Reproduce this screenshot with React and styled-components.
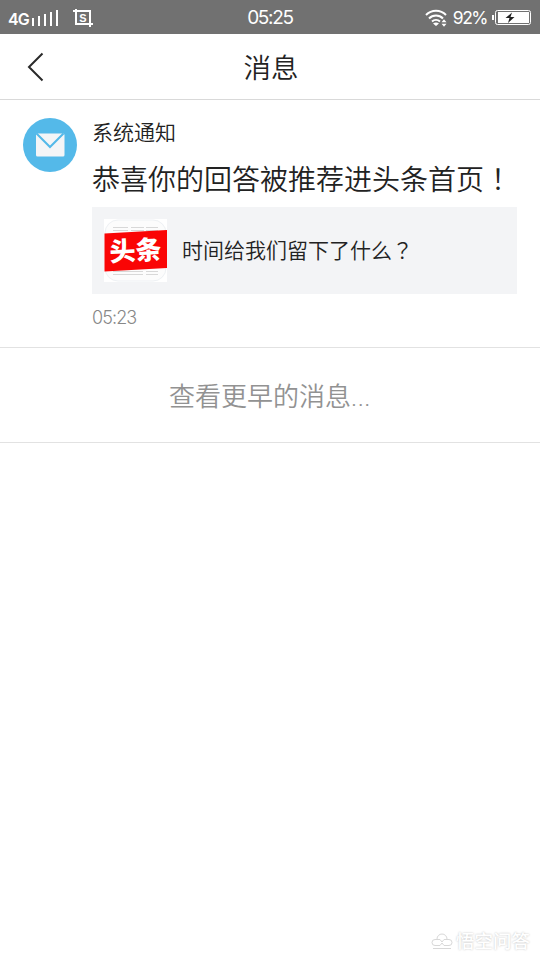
import styled, { createGlobalStyle } from "styled-components";

const GlobalStyle = createGlobalStyle`
  * {
    box-sizing: border-box;
  }

  body {
    margin: 0;
    background-color: #ffffff;
    font-family: Roboto, "Noto Sans CJK SC", sans-serif;
    font-weight: 350;
    color: #222222;
  }
`;

// Page
const Page = styled.div`
  display: flex;
  flex-direction: column;
  width: 100%;
  height: 960px;
  overflow: hidden;
`;

// StatusBar
const StatusBar = styled.div`
  display: grid;
  grid-template-columns: 1fr auto 1fr;
  align-items: center;
  height: 34px;
  padding: 0 8px;
  flex-shrink: 0;
  background-color: #717171;
  color: #ffffff;
`;

// StatusGroup
const StatusGroup = styled.div`
  display: flex;
  align-items: center;
  justify-content: ${({ $end }) => ($end ? "flex-end" : "flex-start")};
`;

// Network
const Network = styled.span`
  width: 22px;
  margin-right: 1px;
  padding-top: 3px;
  font-family: Inter, sans-serif;
  font-size: 16px;
  font-weight: 600;
  line-height: 20px;
  letter-spacing: -0.9px;
`;

// Clock
const Clock = styled.span`
  padding-top: 1px;
  font-family: Inter, sans-serif;
  font-size: 19px;
  font-weight: 400;
  line-height: 34px;
  letter-spacing: -1.3px;
`;

// Percent
const Percent = styled.span`
  margin: 0 5px;
  font-family: Inter, sans-serif;
  font-size: 17.5px;
  font-weight: 400;
  line-height: 34px;
  letter-spacing: -1.5px;
`;

// SignalIcon
const SignalIcon = styled.svg`
  width: 27px;
  height: 34px;
  margin-right: 15px;
`;

// CropIcon
const CropIcon = styled.svg`
  width: 20px;
  height: 34px;
`;

// WifiIcon
const WifiIcon = styled.svg`
  width: 23px;
  height: 34px;
`;

// BatteryIcon
const BatteryIcon = styled.svg`
  width: 40px;
  height: 34px;
`;

// Header
const Header = styled.header`
  display: grid;
  grid-template-columns: 72px 1fr 72px;
  align-items: center;
  height: 66px;
  flex-shrink: 0;
  border-bottom: 1px solid #d9d9d9;
`;

// BackButton
const BackButton = styled.button`
  display: flex;
  height: 65px;
  padding: 0 0 0 27px;
  border: none;
  background: none;
`;

// Title
const Title = styled.h1`
  margin: 0;
  padding: 4px 0 0 2px;
  font-size: 27.5px;
  font-weight: 350;
  line-height: 40px;
  text-align: center;
`;

// Notice
const Notice = styled.section`
  display: flex;
  gap: 15px;
  height: 248px;
  padding: 18px 23px 0;
  flex-shrink: 0;
  border-bottom: 1px solid #e2e2e2;
`;

// Avatar
const Avatar = styled.svg`
  width: 54px;
  height: 54px;
  flex-shrink: 0;
`;

// NoticeBody
const NoticeBody = styled.div`
  flex: 1;
  min-width: 0;
  white-space: nowrap;
`;

// Sender
const Sender = styled.div`
  height: 39px;
  font-size: 21px;
  line-height: 30px;
`;

// Message
const Message = styled.div`
  height: 50px;
  font-size: 28px;
  line-height: 42px;
`;

// Mark, full-width punctuation centred in its square
const Mark = styled.span`
  font-family: "Noto Sans CJK TC", sans-serif;
`;

// QuestionCard
const QuestionCard = styled.div`
  display: flex;
  align-items: center;
  gap: 15px;
  height: 87px;
  padding-left: 12px;
  background-color: #f3f4f6;
  font-size: 21px;
`;

// Question
const Question = styled.span`
  padding-bottom: 1px;
  line-height: 30px;
`;

// Logo
const Logo = styled.svg`
  width: 63px;
  height: 63px;
  flex-shrink: 0;
`;

// SentAt
const SentAt = styled.div`
  margin-top: 12px;
  font-family: Inter, sans-serif;
  font-size: 18px;
  font-weight: 300;
  line-height: 24px;
  letter-spacing: -0.9px;
  color: #888888;
`;

// MoreButton
const MoreButton = styled.button`
  height: 95px;
  padding: 3px 0 0;
  flex-shrink: 0;
  border: none;
  border-bottom: 1px solid #e2e2e2;
  background: none;
  font-family: inherit;
  font-size: 26px;
  font-weight: 350;
  line-height: 40px;
  color: #929292;
`;

// Dots
const Dots = styled.span`
  letter-spacing: 0.4px;
`;

// Watermark
const Watermark = styled.div`
  display: flex;
  align-items: center;
  align-self: flex-end;
  gap: 3px;
  margin: auto 10px 5px 0;
  font-size: 18.5px;
  font-weight: 500;
  line-height: 26px;
  color: #ffffff;
  text-shadow: 0 0 2px #bdbdbd;
`;

const App = () => {
  return (
    <Page>
      <GlobalStyle />
      <StatusBar>
        <StatusGroup>
          <Network>4G</Network>
          <SignalIcon viewBox="0 0 27 34" stroke="#fff" strokeWidth="2">
            <path d="M2 17v8M8 15v10M14 13v12M20 11v14M26 9v16" />
          </SignalIcon>
          <CropIcon viewBox="0 0 20 34" fill="none" stroke="#fff" strokeWidth="2">
            <path d="M0 10h17v16M3 8v15h17" />
            <text
              x="10"
              y="20.5"
              fill="#fff"
              stroke="none"
              fontFamily="Liberation Sans"
              fontSize="11"
              fontWeight="700"
              textAnchor="middle"
            >
              S
            </text>
          </CropIcon>
        </StatusGroup>
        <Clock>05:25</Clock>
        <StatusGroup $end>
          <WifiIcon viewBox="0 0 23 34" fill="none" stroke="#fff" strokeWidth="2">
            <path d="M1 14a14 14 0 0 1 20 0M4 17.5a9.8 9.8 0 0 1 14 0M7 20.5a6 6 0 0 1 8 0" />
            <path d="M8 22.5q3-2 6 0l-3 2.5zM16.5 21.3l2.5-3 2.5 3zM16.5 22.7l2.5 3 2.5-3z" fill="#fff" stroke="none" />
          </WifiIcon>
          <Percent>92%</Percent>
          <BatteryIcon viewBox="0 0 40 34" fill="none">
            <path d="M1 14v5" stroke="#fff" strokeWidth="2" />
            <rect x="3.5" y="9.5" width="35" height="14" rx="2" stroke="#fff" />
            <rect x="6" y="11" width="31" height="11" fill="#fff" />
            <path d="M20 11.5l-6.5 5.5h4l-1.5 5 6.5-6h-4z" fill="#222" />
          </BatteryIcon>
        </StatusGroup>
      </StatusBar>

      <Header>
        <BackButton aria-label="返回">
          <svg width="18" height="65" viewBox="0 0 18 65" fill="none" stroke="#2a2a2a" strokeWidth="2">
            <path d="M15.5 19.5L2 33l13.5 13.5" />
          </svg>
        </BackButton>
        <Title>消息</Title>
      </Header>

      <Notice>
        <Avatar viewBox="0 0 54 54">
          <circle cx="27" cy="27" r="27" fill="#54b9e9" />
          <rect x="13" y="15.5" width="28.5" height="23" rx="1.5" fill="#f4f5f7" />
          <path d="M13.5 15.5L27 29l13.5-13.5" fill="none" stroke="#54b9e9" strokeWidth="2" />
        </Avatar>
        <NoticeBody>
          <Sender>系统通知</Sender>
          <Message>
            恭喜你的回答被推荐进头条首页<Mark>！</Mark>
          </Message>
          <QuestionCard>
            <Logo viewBox="0 0 63 63">
              <rect width="63" height="63" fill="#fff" />
              <rect x="1" y="1" width="61" height="61" rx="13" fill="#fcfcfc" stroke="#eef1f4" />
              <path
                d="M9 8.5h15M27 8.5h13M42 8.5h12M9 11.5h15M27 11.5h13M42 11.5h12M9 52.5h30M42 52.5h12M9 55.5h30M42 55.5h12"
                stroke="#d8d8d8"
              />
              <path d="M0.5 14.5L63 11v38L0.5 52.5z" fill="#fa0505" />
              <text
                x="31.5"
                y="41"
                fill="#fff"
                fontFamily="Noto Sans CJK SC"
                fontSize="26"
                fontWeight="900"
                textAnchor="middle"
                transform="rotate(-3 31.5 31.5)"
              >
                头条
              </text>
            </Logo>
            <Question>
              时间给我们留下了什么<Mark>？</Mark>
            </Question>
          </QuestionCard>
          <SentAt>05:23</SentAt>
        </NoticeBody>
      </Notice>

      <MoreButton>
        查看更早的消息<Dots>...</Dots>
      </MoreButton>

      <Watermark>
        <svg width="22" height="18" viewBox="0 0 22 18" fill="none" stroke="#d8d8d8">
          <path d="M6 6a5 5 0 0 1 10 0M4 6.5h5l2 2.5 2-2.5h5a3 3 0 0 1 0 6h-5l-2-2.5-2 2.5H4a3 3 0 0 1 0-6zM2 15.5h18" />
        </svg>
        <span>悟空问答</span>
      </Watermark>
    </Page>
  );
};

export default App;
